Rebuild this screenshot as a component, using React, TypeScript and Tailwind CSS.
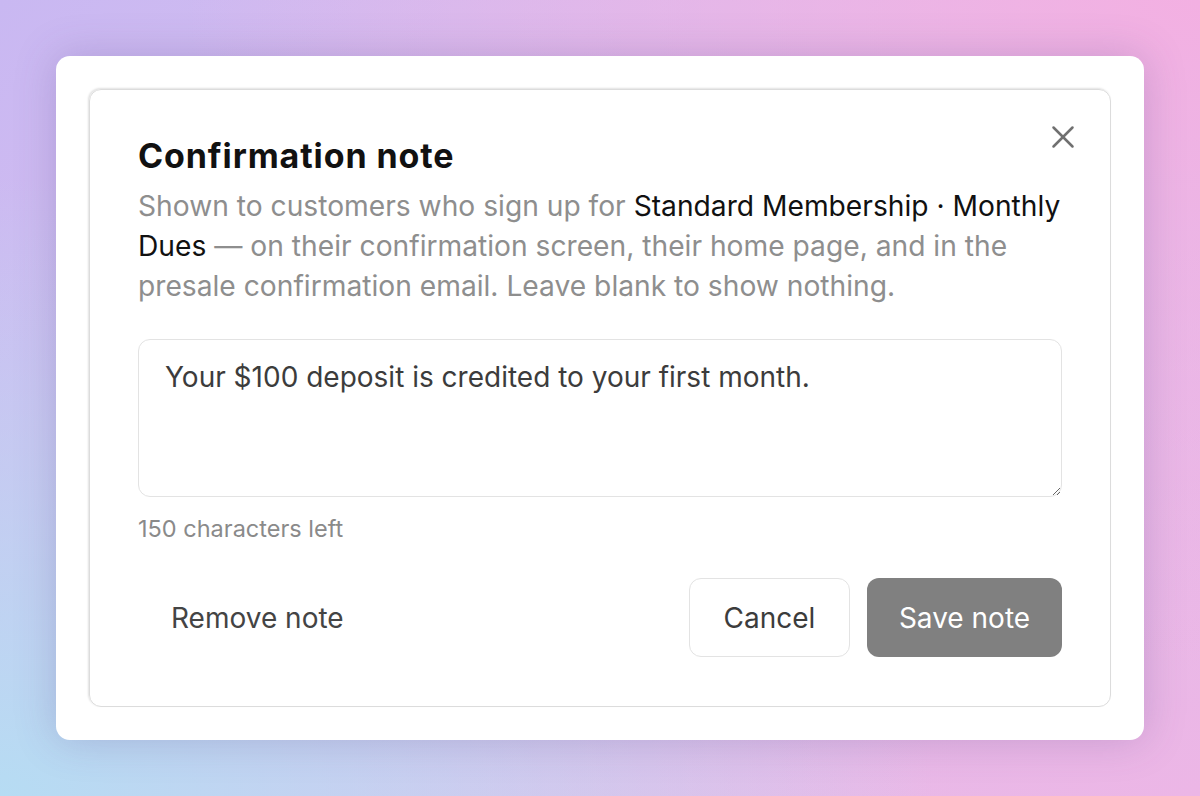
import { X } from "lucide-react";

export default function App() {
  return (
    <div
      className="w-[1200px] h-[796px] flex items-center justify-center p-14"
      style={{
        background:
          "radial-gradient(ellipse at 0% 100%, #b6dcf3 0%, rgba(182,220,243,0) 55%), radial-gradient(ellipse at 100% 0%, #f3b0e2 0%, rgba(243,176,226,0) 60%), radial-gradient(ellipse at 100% 100%, #ecb6e6 0%, rgba(236,182,230,0) 50%), linear-gradient(135deg, #c9b8f2 0%, #dcc0ee 50%, #e6bbe8 100%)",
        fontFamily: "Inter, 'Noto Sans', sans-serif",
      }}
    >
      <div className="w-full h-full bg-white rounded-[14px] p-[33px] shadow-[0_0_40px_rgba(90,70,140,0.25)]">
        <div className="relative h-full rounded-[12px] border-[1.5px] border-[#dcdcdc] shadow-[-1px_-1px_2px_rgba(0,0,0,0.12)] pt-[45px] px-[48px] pb-[49px] flex flex-col">
          <button className="absolute top-[28px] right-[28px] w-[38px] h-[38px] flex items-center justify-center text-[#707070]">
            <X size={38} strokeWidth={1.6} />
          </button>

          <h2 className="text-[34px] leading-[42px] font-bold text-[#111] tracking-[0.9px]">
            Confirmation note
          </h2>
          <p className="mt-[9px] text-[28.2px] leading-[40px] text-[#8e8e8e]">
            Shown to customers who sign up for{" "}
            <span className="text-[#111]">Standard Membership · Monthly Dues</span> — on their
            confirmation screen, their home page, and in the presale confirmation email. Leave
            blank to show nothing.
          </p>

          <textarea
            className="mt-[33px] h-[158px] w-full rounded-[12px] border-[1.5px] border-[#e3e3e3] px-[26px] py-[19px] text-[28px] leading-[36px] text-[#3c3c3c] outline-none resize-y"
            defaultValue="Your $100 deposit is credited to your first month."
          />
          <div className="mt-[17px] text-[23.5px] leading-[30px] text-[#8a8a8a]">
            150 characters left
          </div>

          <div className="mt-[34px] flex items-center justify-between">
            <button className="h-[79px] px-[33px] text-[28px] text-[#444]">Remove note</button>
            <div className="flex gap-[17px]">
              <button className="h-[79px] w-[161px] rounded-[12px] border-[1.5px] border-[#e3e3e3] text-[28px] text-[#3c3c3c]">
                Cancel
              </button>
              <button className="h-[79px] w-[195px] rounded-[12px] bg-[#808080] text-[28px] text-white">
                Save note
              </button>
            </div>
          </div>
        </div>
      </div>
    </div>
  );
}
